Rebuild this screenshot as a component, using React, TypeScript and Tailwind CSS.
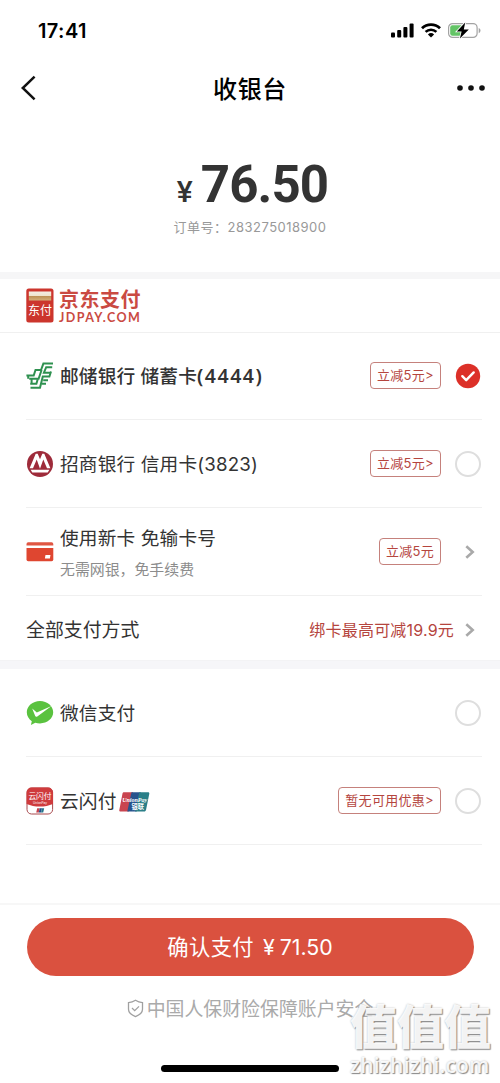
import type { ReactNode } from 'react';

function StatusBar() {
  return (
    <div className="flex h-[61px] items-center justify-between pl-[38px] pr-[19px]">
      <span className="text-[20px] font-semibold tracking-[0.4px] text-black">17:41</span>
      <div className="flex items-center gap-[7px]">
        <svg width="23" height="15" viewBox="0 0 23 15" fill="#000">
          <rect x="0" y="9.5" width="4" height="5" rx="1" />
          <rect x="6.2" y="7" width="4" height="7.5" rx="1" />
          <rect x="12.4" y="4" width="4" height="10.5" rx="1" />
          <rect x="18.6" y="0.5" width="4" height="14" rx="1" />
        </svg>
        <svg width="20" height="15" viewBox="0 0 20 15" fill="none" stroke="#000">
          <path d="M1 5.3a13 13 0 0 1 18 0" strokeWidth="2.8" />
          <path d="M4.6 8.9a7.8 7.8 0 0 1 10.8 0" strokeWidth="2.6" />
          <path d="M10 14.6 6.9 11.4a4.5 4.5 0 0 1 6.2 0Z" fill="#000" stroke="none" />
        </svg>
        <svg width="33" height="17" viewBox="0 0 33 17">
          <rect x="0.6" y="1.6" width="28.5" height="13.8" rx="4" fill="none" stroke="#a3a3a3" strokeWidth="1.2" />
          <rect x="2.2" y="3.2" width="12.8" height="10.6" rx="2.2" fill="#63c466" />
          <path d="M30.7 6v5.2c1.2-.4 1.8-1.4 1.8-2.6s-.6-2.2-1.8-2.6Z" fill="#a3a3a3" />
          <path d="M17.2 0.4 8.8 9.5h4.8L11.9 16.5 20.8 7.5h-5Z" fill="#000" stroke="#fff" strokeWidth="1.6" paintOrder="stroke" />
        </svg>
      </div>
    </div>
  );
}

function Header() {
  return (
    <div className="flex h-[54px] items-center justify-between pl-[20px] pr-[15px]">
      <svg width="28" height="26" viewBox="0 0 28 26" fill="none" stroke="#111" strokeWidth="2.5">
        <path d="M14.6 1.7 2.8 13l11.800 11.300" />
      </svg>
      <span className="mr-[5px] pt-[3px] text-[24px] leading-none font-medium tracking-[0.6px] text-black">
        收银台
      </span>
      <svg width="28" height="6" viewBox="0 0 28 6" fill="#111">
        <circle cx="3" cy="3" r="2.8" />
        <circle cx="14" cy="3" r="2.8" />
        <circle cx="25" cy="3" r="2.8" />
      </svg>
    </div>
  );
}

function JdPayLogo() {
  return (
    <div className="flex items-center gap-[5px] text-[#ca4a42]">
      <svg width="28" height="35" viewBox="0 0 28 35">
        <defs>
          <linearGradient id="slot" x1="0" y1="0" x2="0" y2="1">
            <stop offset="0" stopColor="#f3eee5" />
            <stop offset="0.5" stopColor="#efe4cc" />
            <stop offset="0.55" stopColor="#bd9257" />
            <stop offset="1" stopColor="#d3b07a" />
          </linearGradient>
        </defs>
        <rect x="0.3" y="0.5" width="27.2" height="34" rx="2.5" fill="#cc352d" />
        <rect x="2.8" y="3.5" width="22.4" height="9" fill="url(#slot)" />
        <text x="2" y="27" fontSize="12" fontWeight="400" textLength="24" fill="#fff">东付</text>
      </svg>
      <div className="flex flex-col pt-[2px]">
        <span className="text-[20px] leading-[21px] font-bold tracking-[0.5px]">京东支付</span>
        <span className="font-['Lato',sans-serif] text-[12.5px] leading-[13px] font-bold tracking-[1.4px]">
          JDPAY.COM
        </span>
      </div>
    </div>
  );
}

function PostBankIcon() {
  return (
    <svg width="28" height="28" viewBox="0 0 28 28" fill="none" stroke="#2f9150" strokeWidth="2">
      <path d="M27 1.600H17.400L15 8H9.500L7.700 13.500H.400" />
      <path d="M26.200 5.200h-6L17.900 10.700h6.800" />
      <path d="M15.600 8 12.600 16.800H3.200" />
      <path d="M25 9.500 23.400 14.600H16.800L14 25.800H4.500" />
      <path d="M2.200 13.500v3.300M4.200 21.700h6.200l1.300-4.500M5.600 17v4.700M17.200 18.200h4.800M15.800 21.800h4.200" />
    </svg>
  );
}

function MerchantsBankIcon() {
  return (
    <svg width="28" height="28" viewBox="0 0 28 28">
      <circle cx="14" cy="14" r="13" fill="#9e2b3a" />
      <path d="M3.600 18.300 9.700 3.800h2L14 9.200l2.300-5.400h2l6.100 14.500h-3.400L17.300 9.600 14 18.700 10.700 9.600 7 18.300Z" fill="#fff" />
      <path d="M4.600 19.800h18.800l-1.700 2.600H6.300Z" fill="#fff" />
    </svg>
  );
}

function NewCardIcon() {
  return (
    <svg width="28" height="20" viewBox="0 0 28 20">
      <path d="M0.500 3.500V2a1.700 1.700 0 0 1 1.700-1.700h23.400A1.700 1.700 0 0 1 27.300 2v1.500Z" fill="#e05642" />
      <path d="M0.500 6h26.800v11.500a1.700 1.700 0 0 1-1.700 1.700H2.200a1.700 1.700 0 0 1-1.700-1.700Z" fill="#df4630" />
      <path d="M19.500 13h5l-.6 3.500h-5Z" fill="#fff" />
    </svg>
  );
}

function WechatPayIcon() {
  return (
    <svg width="28" height="26" viewBox="0 0 28 26">
      <path
        d="M14 1C6.700 1 .8 6 .8 12.300c0 3.700 2 6.900 5 9L4.900 24.900l4.400-2.200c1.500.5 3 .7 4.700.7 7.300 0 13.200-5 13.200-11.100S21.300 1 14 1Z"
        fill="#5ac23f"
      />
      <path d="m6.200 8.600 4.600 4L25.500 6 11.300 16.400c-.9.600-1.700.3-2.100-.5Z" fill="#fff" />
    </svg>
  );
}

function QuickPassIcon() {
  return (
    <svg width="28" height="28" viewBox="0 0 28 28">
      <rect x="1" y="1" width="25.600" height="26" rx="4.500" fill="#fff" stroke="#a8494d" strokeWidth="1" />
      <path d="M.6 17V5.500A4.900 4.900 0 0 1 5.500.6h16.600A4.900 4.900 0 0 1 27 5.500V17c-8 3.400-18.400 3.400-26.400 0Z" fill="#cf3b3d" />
      <text x="2.500" y="11.500" fontSize="7.800" fontWeight="400" textLength="23" fill="#fff">云闪付</text>
      <text x="7" y="16.600" fontSize="3.600" textLength="14" lengthAdjust="spacingAndGlyphs" fill="#fff">UnionPay</text>
      <path d="M11.200 21.200h2.500l-1 4.300h-2.500Z" fill="#c83f49" />
      <path d="M13.700 21.200h2.300l-1 4.300h-2.300Z" fill="#244f8c" />
      <path d="M16 21.200h2.200l-1 4.300H15Z" fill="#27748a" />
    </svg>
  );
}

function UnionPayIcon() {
  return (
    <svg width="31" height="20" viewBox="0 0 31 20">
      <path d="M5 .3h9l-4.200 19.200H1.500c-1 0-1.400-.6-1.200-1.500L3.500 1.600C3.700.7 4.200.3 5 .3Z" fill="#c9444f" />
      <path d="M12.500.3h9.300l-4.200 19.200H8.300Z" fill="#28538d" />
      <path d="M20.300.3h8.700c1 0 1.500.6 1.300 1.500L27 18c-.2.900-.8 1.500-1.700 1.500h-9.200Z" fill="#2a7f88" />
      <text
        x="3.200"
        y="9.800"
        fontSize="7"
        fontWeight="700"
        fontStyle="italic"
        textLength="25"
        lengthAdjust="spacingAndGlyphs"
        fill="#fff"
        className="font-['Liberation_Serif',serif]"
      >
        UnionPay
      </text>
      <text x="12.500" y="16.600" fontSize="6.500" fontWeight="700" textLength="12.500" lengthAdjust="spacingAndGlyphs" fill="#fff">
        银联
      </text>
    </svg>
  );
}

function Radio({ checked = false }: { checked?: boolean }) {
  if (!checked) {
    return <span className="size-[26px] rounded-full border-2 border-[#dedede]" />;
  }
  return (
    <svg width="26" height="26" viewBox="0 0 26 26" fill="none">
      <circle cx="13" cy="13" r="12.200" fill="#dc3028" />
      <path d="m7.300 13.200 3.900 4 7.500-7.800" stroke="#fff" strokeWidth="2.400" strokeLinecap="round" strokeLinejoin="round" />
    </svg>
  );
}

function Chevron() {
  return (
    <svg width="10" height="14" viewBox="0 0 10 14" fill="none" stroke="#a9a9a9" strokeWidth="2.600">
      <path d="m1.300 1.200 6.400 5.800-6.400 5.800" />
    </svg>
  );
}

function Coupon({ children }: { children: ReactNode }) {
  return (
    <span className="flex h-[27px] items-center rounded-[4px] border border-[#c5817c] px-[6px] text-[13px] leading-none tracking-[0.300px] text-[#b5453e]">
      {children}
    </span>
  );
}

type PayRowProps = {
  icon: ReactNode;
  title: ReactNode;
  desc?: string;
  mark?: ReactNode;
  coupon?: string;
  right: ReactNode;
};

function PayRow({ icon, title, desc, mark, coupon, right }: PayRowProps) {
  return (
    <div className="ml-[26px] mr-[18px] flex h-[88px] items-center border-b border-[#f0f0f0]">
      <div className="flex w-[34px] shrink-0 items-center">{icon}</div>
      <div className="flex flex-1 flex-col">
        <div className="flex items-center gap-[2px] pt-[2px]">
          <span className="text-[18.700px] leading-[28px] tracking-[0.150px] text-[#333]">{title}</span>
          {mark}
        </div>
        {desc && <span className="mt-[6px] text-[14.900px] leading-[22px] text-[#8c8c8c]">{desc}</span>}
      </div>
      {coupon && <Coupon>{coupon}</Coupon>}
      <div className="ml-[14px] flex w-[27px]">{right}</div>
    </div>
  );
}

export default function App() {
  return (
    <div className="flex h-[1083px] w-[500px] flex-col overflow-hidden bg-white font-['Inter','Noto_Sans_CJK_SC',sans-serif]">
      <StatusBar />
      <Header />

      <div className="flex h-[157px] flex-col items-center pt-[43px]">
        <div className="flex items-baseline pl-[5px] text-[#333]">
          <span className="mr-[8px] font-['Roboto',sans-serif] text-[30px] leading-none font-medium">¥</span>
          <span className="font-['Roboto',sans-serif] text-[51px] leading-[53px] font-bold tracking-[-0.9px]">76.50</span>
        </div>
        <span className="mt-[6px] text-[13px] leading-[20px] tracking-[0.5px] text-[#999]">
          订单号：283275018900
        </span>
      </div>

      <div className="h-[7px] bg-[#f6f6f7]" />
      <div className="flex h-[54px] items-center border-b border-[#f0f0f0] pl-[26px]">
        <JdPayLogo />
      </div>
      <div className="-mt-px">
        <PayRow
          icon={<PostBankIcon />}
          title={
            <span className="font-medium">
              邮储银行 储蓄卡<span className="font-['Noto_Sans',sans-serif] text-[19.500px] font-semibold tracking-[1.500px]">(4444)</span>
            </span>
          }
          coupon="立减5元>"
          right={<Radio checked />}
        />
        <PayRow icon={<MerchantsBankIcon />} title="招商银行 信用卡(3823)" coupon="立减5元>" right={<Radio />} />
        <PayRow
          icon={<NewCardIcon />}
          title="使用新卡 免输卡号"
          desc="无需网银，免手续费"
          coupon="立减5元"
          right={<span className="ml-[10px]"><Chevron /></span>}
        />
      </div>
      <div className="flex h-[65px] items-center border-b border-[#f3f3f5] pt-[3px] pl-[26px] pr-[18px]">
        <span className="flex-1 pt-[3px] text-[18.900px] text-[#333]">全部支付方式</span>
        <span className="text-[16px] tracking-[0.200px] text-[#b5453e]">绑卡最高可减19.9元</span>
        <div className="ml-px flex w-[27px] pl-[10px]">
          <Chevron />
        </div>
      </div>

      <div className="h-[8px] bg-[#f6f6f9]" />
      <PayRow icon={<WechatPayIcon />} title="微信支付" right={<Radio />} />
      <PayRow icon={<QuickPassIcon />} title="云闪付" mark={<UnionPayIcon />} coupon="暂无可用优惠>" right={<Radio />} />

      <div className="relative mt-auto flex h-[180px] flex-col items-center border-t-2 border-[#f7f7f7] pt-[13px]">
        <button className="flex h-[58px] w-[447px] items-center justify-center rounded-full bg-[#da513f] pt-[2px] text-[21.300px] text-white">
          <span className="tracking-[0.400px]">确认支付</span>
          <span className="ml-[9px]">¥</span>
          <span className="ml-[5px]">71.50</span>
        </button>
        <div className="mt-[21px] flex items-center text-[18.900px] leading-[26px] text-[#aaa]">
          <svg className="mr-[3px] mb-[3px]" width="17" height="19" viewBox="0 0 17 19" fill="none" stroke="#a0a0a0" strokeWidth="1.300">
            <path d="M8.500 1.300c2.200 1.500 4.400 2.200 7 2.300v6.700c0 3.400-3.100 5.800-7 7.300-3.900-1.500-7-3.900-7-7.300V3.600c2.600-.1 4.800-.8 7-2.300Z" />
            <path d="m5 9 2.700 2.600L12 7.400" />
          </svg>
          中国人保财险保障账户安全
        </div>
        <div className="absolute bottom-[11px] left-[161px] h-[7px] w-[178px] rounded-full bg-black" />

        {/* site watermark */}
        <div className="absolute bottom-[4px] left-[350px] flex w-[145px] flex-col whitespace-nowrap text-white/90 [text-shadow:1px_1px_1px_#888,0_0_2px_#bbb]">
          <span className="text-[47px] leading-[50px] font-black">值值值</span>
          <span className="font-['Open_Sans',sans-serif] text-[21px] leading-[27px] font-semibold tracking-[0.200px]">zhizhizhi.com</span>
        </div>
      </div>
    </div>
  );
}
